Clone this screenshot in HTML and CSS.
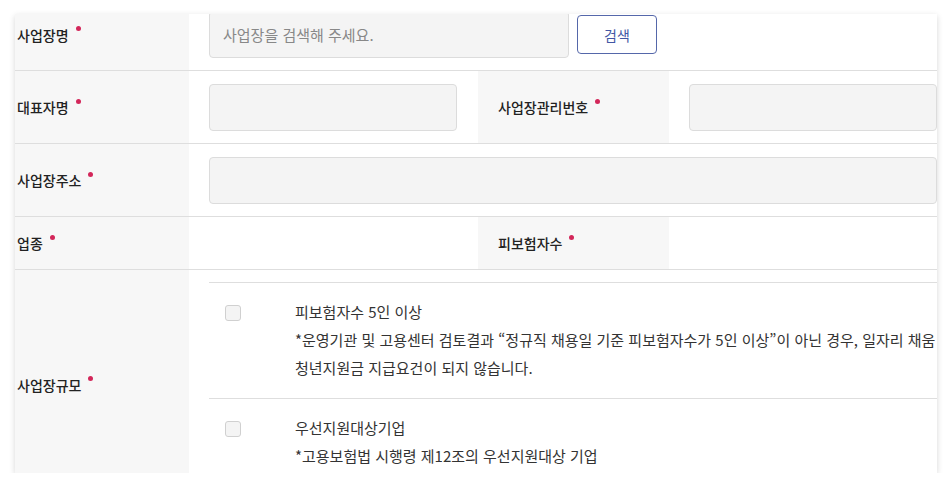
FILE: index.html
```html
<!DOCTYPE html>
<html lang="ko">
<head>
<meta charset="utf-8">
<link rel="stylesheet" href="styles.css">
</head>
<body>
<div class="card">
  <div class="form">
    <div class="row">
      <div class="label req">사업장명</div>
      <div class="field span3 search">
        <div class="input wide-search">사업장을 검색해 주세요.</div>
        <button class="btn">검색</button>
      </div>
    </div>
    <div class="row">
      <div class="label req">대표자명</div>
      <div class="field"><div class="input"></div></div>
      <div class="label label2 req">사업장관리번호</div>
      <div class="field last"><div class="input"></div></div>
    </div>
    <div class="row">
      <div class="label req">사업장주소</div>
      <div class="field span3 last"><div class="input"></div></div>
    </div>
    <div class="row short">
      <div class="label req">업종</div>
      <div class="field"></div>
      <div class="label label2 req">피보험자수</div>
      <div class="field last"></div>
    </div>
    <div class="row tall">
      <div class="label req">사업장규모</div>
      <div class="field span3 last">
        <ul class="options">
          <li class="option">
            <span class="check"></span>
            <div class="option-text">
              <p class="title">피보험자수 5인 이상</p>
              <p class="desc">*운영기관 및 고용센터 검토결과 “정규직 채용일 기준 피보험자수가 5인 이상”이 아닌 경우, 일자리 채움<br>청년지원금 지급요건이 되지 않습니다.</p>
            </div>
          </li>
          <li class="option">
            <span class="check"></span>
            <div class="option-text">
              <p class="title">우선지원대상기업</p>
              <p class="desc">*고용보험법 시행령 제12조의 우선지원대상 기업</p>
            </div>
          </li>
        </ul>
      </div>
    </div>
  </div>
</div>
</body>
</html>
```
FILE: styles.css
```css
* { box-sizing: border-box; }
html, body {
  margin: 0;
  padding: 0;
  background: #ffffff;
}
body {
  font-family: "Noto Sans CJK KR", "Noto Sans", sans-serif;
  color: #333;
  padding: 14px 15px 0 15px;
}
.card {
  width: 922px;
  height: 459px;
  overflow: hidden;
  background: #fff;
  box-shadow: 0 2px 6px rgba(0, 0, 0, 0.16);
}
.form {
  margin-top: -15px;
}
.row {
  display: grid;
  grid-template-columns: 174px 289px 191px 268px;
  border-bottom: 1px solid #dedede;
  min-height: 72px;
}
.row + .row { min-height: 73px; }
.row.short { min-height: 53px; }
.label {
  background: #f7f7f7;
  display: flex;
  align-items: center;
  padding-left: 2px;
  font-size: 14px;
  font-weight: 500;
  color: #222;
}
.label2 { padding-left: 20px; }
.req::after {
  content: "";
  width: 5px;
  height: 5px;
  border-radius: 50%;
  background: #d3275a;
  margin-left: 7px;
  position: relative;
  top: -6px;
}
.field {
  padding: 12px 21px 12px 20px;
  display: flex;
  align-items: center;
}
.field.last { padding-right: 0; }
.span3 { grid-column: 2 / 5; }
.input {
  flex: 1;
  height: 47px;
  background: #f4f4f4;
  border: 1px solid #dcdcdc;
  border-radius: 4px;
  font-size: 15px;
  color: #888;
  display: flex;
  align-items: center;
  padding-left: 13px;
}
.input.wide-search { flex: 0 0 360px; }
.search { gap: 8px; }
.btn {
  width: 80px;
  height: 39px;
  background: #fff;
  border: 1px solid #5567aa;
  border-radius: 4px;
  color: #4257a4;
  font-family: inherit;
  font-size: 14px;
  padding: 0;
}
.tall .field { padding-right: 0; display: block; }
.options {
  list-style: none;
  margin: 0;
  padding: 0;
  border-top: 1px solid #dedede;
}
.option {
  display: grid;
  grid-template-columns: 16px 1fr;
  column-gap: 54px;
  padding: 15px 0 16px 16px;
  border-bottom: 1px solid #dedede;
}
.check {
  width: 16px;
  height: 16px;
  margin-top: 7px;
  background: #f4f4f4;
  border: 1px solid #d0d0d0;
  border-radius: 3px;
}
.option-text p {
  margin: 0;
  font-size: 15px;
  line-height: 28px;
  color: #333;
  white-space: nowrap;
}
```
